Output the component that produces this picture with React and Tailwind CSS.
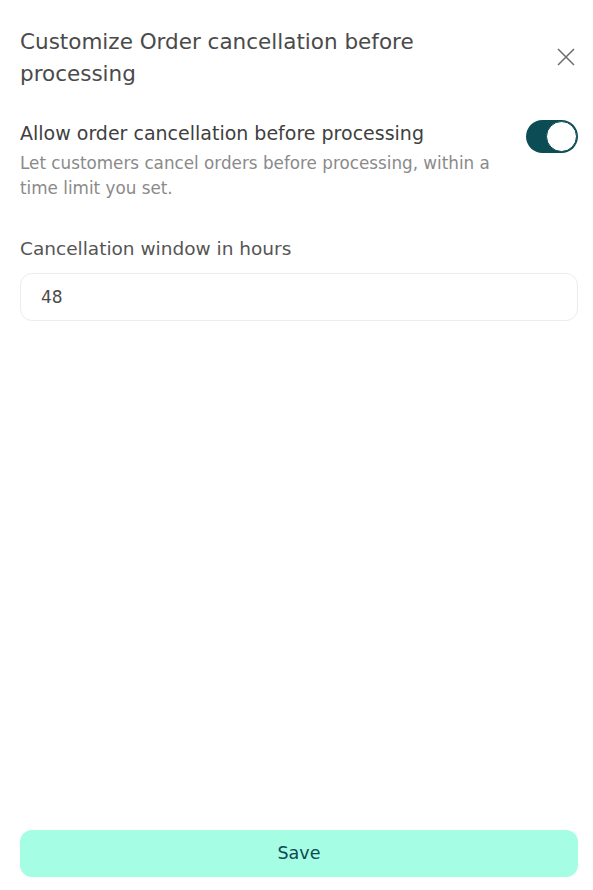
import React, { useState } from 'react'

const App = () => {
  const [enabled, setEnabled] = useState(true)
  const [hours, setHours] = useState('48')

  return (
    <div
      className="h-[890px] w-full bg-white flex flex-col pl-5 pr-[15px]"
      style={{ fontFamily: '"DejaVu Sans", "Noto Sans", sans-serif' }}
    >
      <div className="flex items-start justify-between pt-[26px]">
        <h2 className="text-[21.5px] leading-[32px] text-[#4a4a4a] font-normal w-[440px]">
          Customize Order cancellation before processing
        </h2>
        <button className="mt-[22px] mr-[3px] text-[#6b6b6b]" aria-label="Close">
          <svg width="18" height="18" viewBox="0 0 18 18" fill="none" stroke="currentColor" strokeWidth="1.5">
            <path d="M1 1 L17 17 M17 1 L1 17" />
          </svg>
        </button>
      </div>

      <div className="flex items-start justify-between mt-[30px]">
        <div className="w-[490px]">
          <p className="text-[19px] leading-[26px] text-[#3f3f3f] font-normal">
            Allow order cancellation before processing
          </p>
          <p className="text-[16.8px] leading-[25px] text-[#8a8a8a] mt-[5px]">
            Let customers cancel orders before processing, within a time limit you set.
          </p>
        </div>
        <button
          onClick={() => setEnabled(!enabled)}
          className={`w-[52px] h-[33px] rounded-full flex items-center p-[1px] ${enabled ? 'bg-[#0b4c55] justify-end' : 'bg-gray-300 justify-start'}`}
        >
          <span className="w-[31px] h-[31px] rounded-full bg-white border border-[#0b4c55]" />
        </button>
      </div>

      <label className="block text-[18.5px] leading-[26px] text-[#555555] mt-[35px]">
        Cancellation window in hours
      </label>
      <input
        value={hours}
        onChange={(e) => setHours(e.target.value)}
        className="mt-[11px] h-[48px] w-full rounded-xl border border-[#ececec] px-5 text-[17px] text-[#4a4a4a] outline-none"
      />

      <div className="mt-auto pb-[13px]">
        <button className="w-full h-[47px] rounded-xl bg-[#a5fde3] text-[17.5px] text-[#0e4a50]">
          Save
        </button>
      </div>
    </div>
  )
}

export default App
